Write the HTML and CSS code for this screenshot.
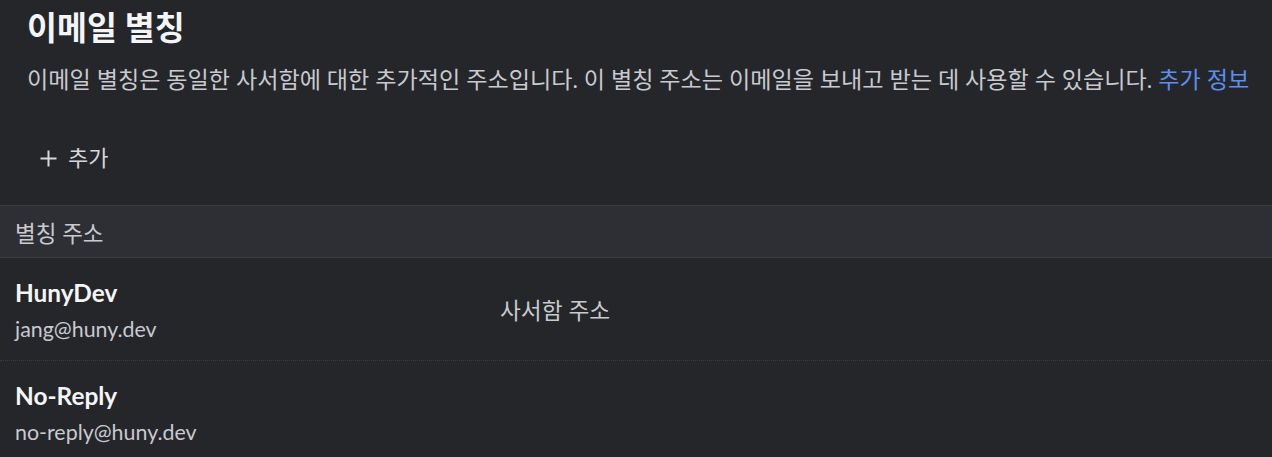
FILE: index.html
```html
<!DOCTYPE html>
<html lang="ko">
<head>
<meta charset="utf-8">
<link rel="stylesheet" href="styles.css">
</head>
<body>
<div class="page">
  <section class="intro">
    <h1 class="title">이메일 별칭</h1>
    <p class="desc">이메일 별칭은 동일한 사서함에 대한 추가적인 주소입니다. 이 별칭 주소는 이메일을 보내고 받는 데 사용할 수 있습니다. <a class="link" href="#">추가 정보</a></p>
  </section>
  <div class="actions">
    <button class="add-btn"><svg class="plus" width="17" height="17" viewBox="0 0 17 17"><path d="M8.5 0.5v16M0.5 8.5h16" stroke="currentColor" stroke-width="2" fill="none"/></svg><span>추가</span></button>
  </div>
  <div class="table">
    <div class="thead">별칭 주소</div>
    <div class="row">
      <div class="cell-main">
        <div class="name">HunyDev</div>
        <div class="email">jang@huny.dev</div>
      </div>
      <div class="cell-type">사서함 주소</div>
    </div>
    <div class="row">
      <div class="cell-main">
        <div class="name">No-Reply</div>
        <div class="email">no-reply@huny.dev</div>
      </div>
      <div class="cell-type"></div>
    </div>
  </div>
</div>
</body>
</html>
```
FILE: styles.css
```css
* { box-sizing: border-box; }
html, body { margin: 0; padding: 0; }
body {
  background: #25262a;
  color: #d6d7da;
  font-family: Lato, "Noto Sans CJK KR", sans-serif;
  overflow: hidden;
}
.page { width: 1272px; }
.intro { padding: 8px 27px 0; }
.title {
  margin: 0;
  font-size: 32.6px;
  font-weight: 700;
  color: #f4f5f7;
  line-height: 40px;
}
.desc {
  margin: 15px 0 0;
  font-size: 23.1px;
  line-height: 32px;
  color: #c8cacf;
  white-space: nowrap;
}
.link { color: #5b8ff0; text-decoration: none; }
.actions { padding: 48px 40px 32px; }
.add-btn {
  display: flex;
  align-items: center;
  gap: 11px;
  background: none;
  border: none;
  padding: 0;
  color: #d6d7da;
  font: inherit;
  font-size: 22px;
  line-height: 30px;
}
.plus { color: #d6d7da; }
.thead {
  height: 53px;
  display: flex;
  align-items: center;
  padding: 0 15px;
  background: #2e2f34;
  border-top: 1px solid #3b3c40;
  border-bottom: 1px solid #3b3c40;
  font-size: 22.5px;
  color: #c8cacf;
}
.row {
  display: flex;
  align-items: center;
  height: 103px;
  border-bottom: 1px dotted #3b3c40;
  padding: 0 15px;
}
.cell-main { width: 485px; padding-top: 2px; }
.name {
  font-size: 24.4px;
  font-weight: 700;
  color: #f4f5f7;
  line-height: 30px;
}
.email {
  margin-top: 7px;
  font-size: 21.4px;
  line-height: 28px;
  color: #c8cacf;
}
.cell-type { font-size: 22.7px; color: #c8cacf; }
```
